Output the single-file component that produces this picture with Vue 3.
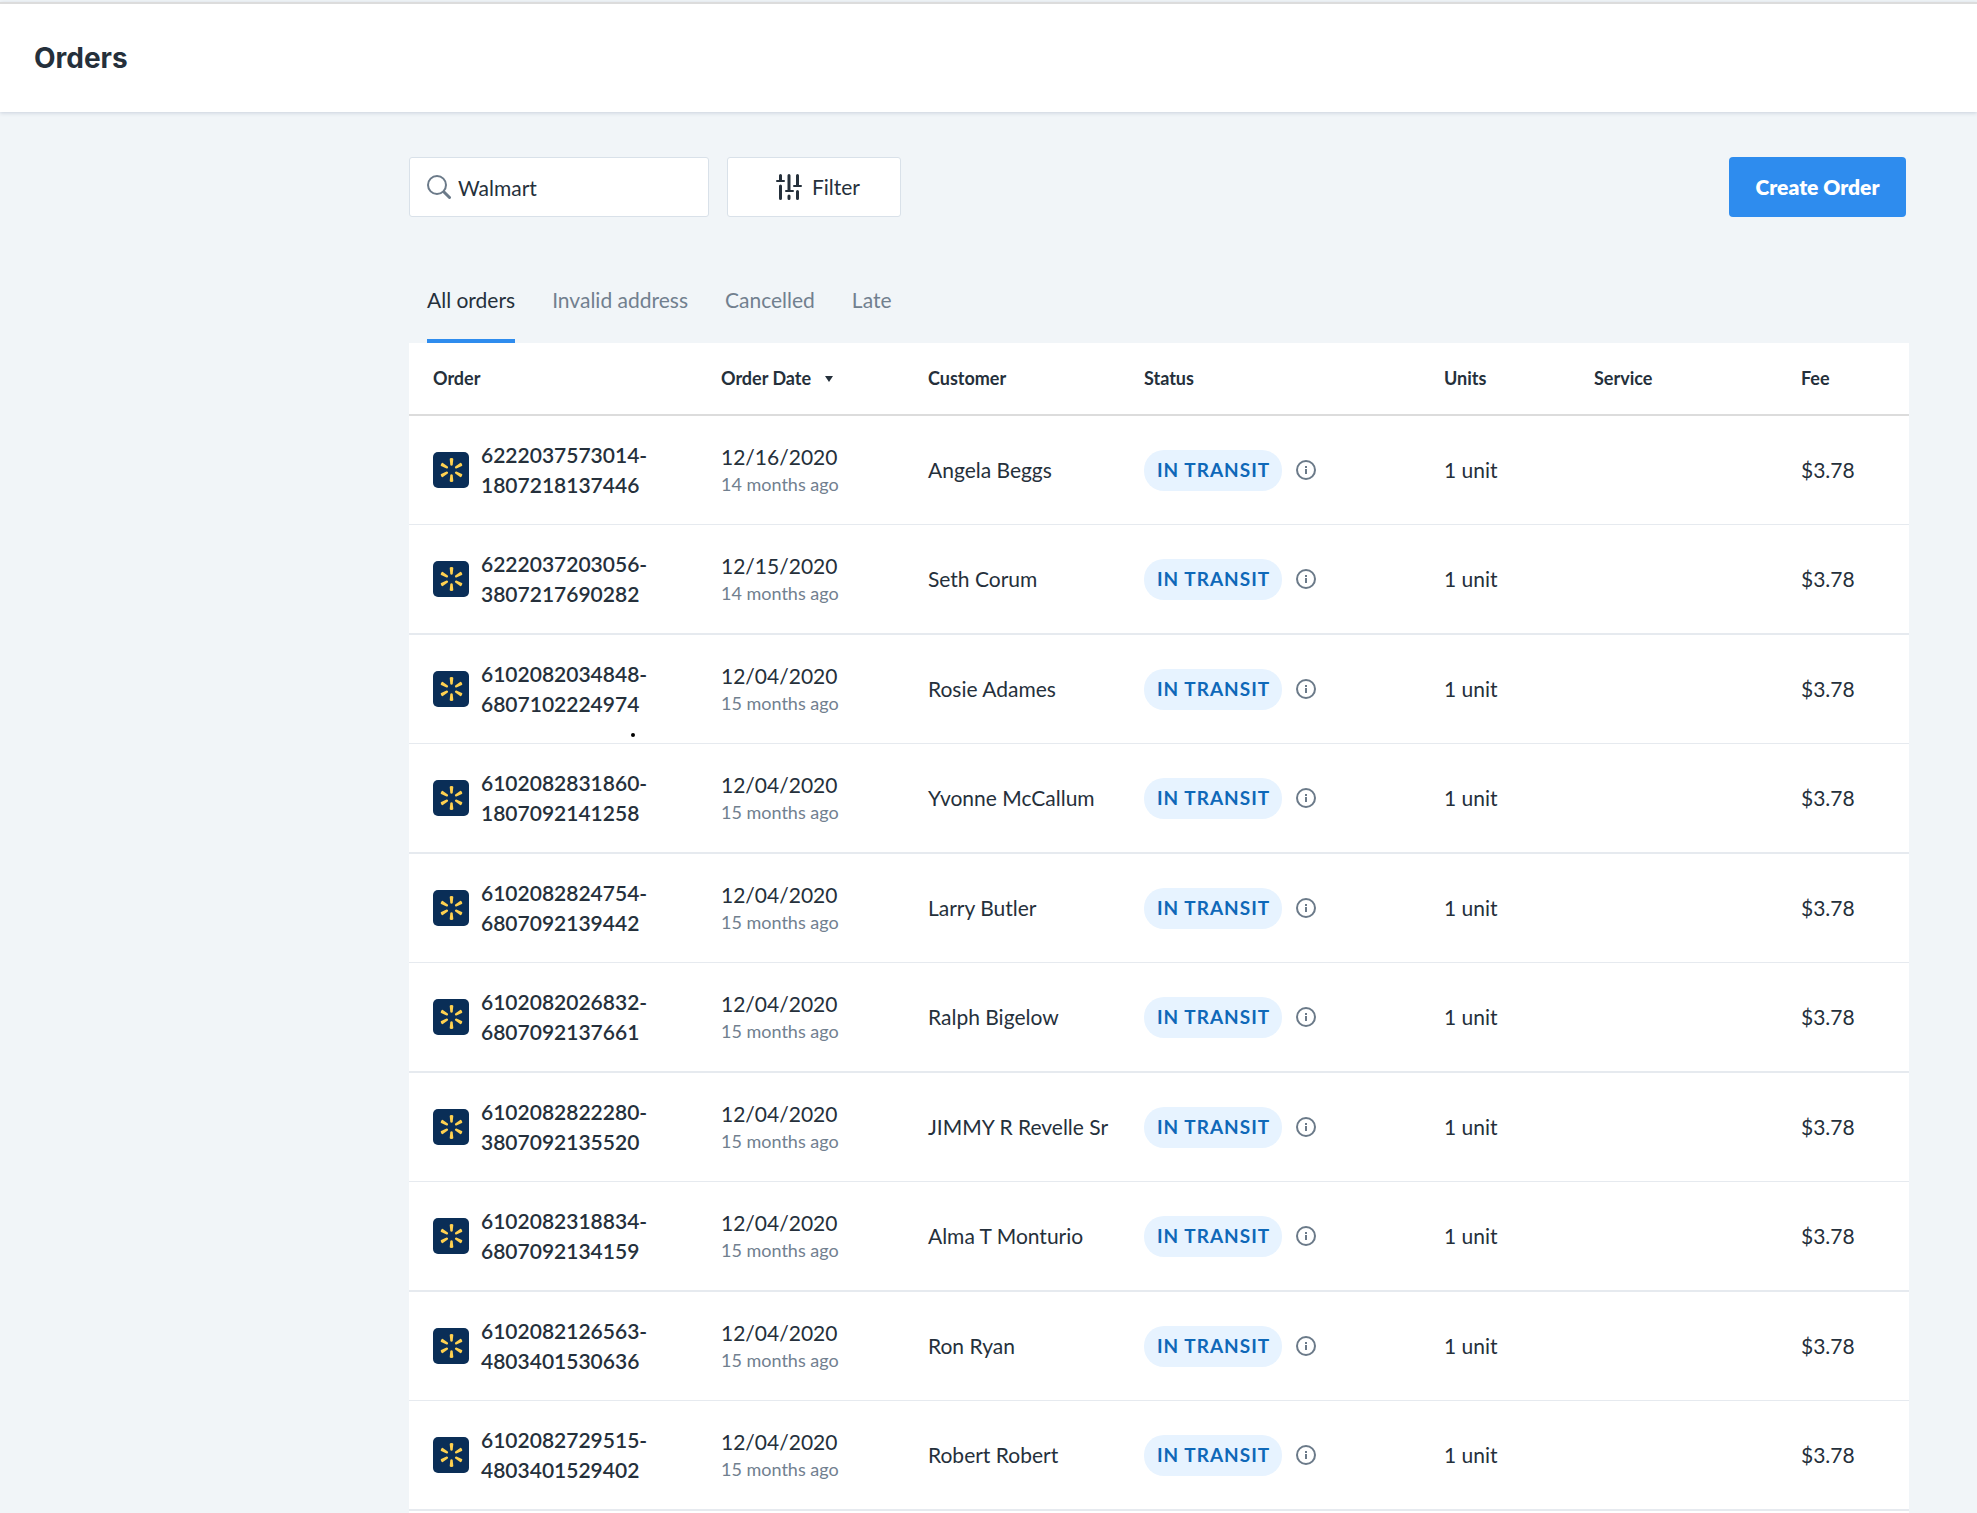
<script setup>
import { ref } from 'vue'

const query = ref('Walmart')
const tabs = ['All orders', 'Invalid address', 'Cancelled', 'Late']
const active = ref('All orders')

const orders = [
  { id: ['6222037573014-', '1807218137446'], date: '12/16/2020', ago: '14 months ago', customer: 'Angela Beggs' },
  { id: ['6222037203056-', '3807217690282'], date: '12/15/2020', ago: '14 months ago', customer: 'Seth Corum' },
  { id: ['6102082034848-', '6807102224974'], date: '12/04/2020', ago: '15 months ago', customer: 'Rosie Adames', marked: true },
  { id: ['6102082831860-', '1807092141258'], date: '12/04/2020', ago: '15 months ago', customer: 'Yvonne McCallum' },
  { id: ['6102082824754-', '6807092139442'], date: '12/04/2020', ago: '15 months ago', customer: 'Larry Butler' },
  { id: ['6102082026832-', '6807092137661'], date: '12/04/2020', ago: '15 months ago', customer: 'Ralph Bigelow' },
  { id: ['6102082822280-', '3807092135520'], date: '12/04/2020', ago: '15 months ago', customer: 'JIMMY R Revelle Sr' },
  { id: ['6102082318834-', '6807092134159'], date: '12/04/2020', ago: '15 months ago', customer: 'Alma T Monturio' },
  { id: ['6102082126563-', '4803401530636'], date: '12/04/2020', ago: '15 months ago', customer: 'Ron Ryan' },
  { id: ['6102082729515-', '4803401529402'], date: '12/04/2020', ago: '15 months ago', customer: 'Robert Robert' }
]
</script>

<template>
  <div class="page">
    <header class="topbar">
      <h1>Orders</h1>
    </header>
    <main class="content">
      <div class="toolbar">
        <label class="search">
          <svg width="24" height="24" viewBox="0 0 24 24" fill="none" stroke="#6b7a89" stroke-width="2" stroke-linecap="round" aria-hidden="true">
            <circle cx="10" cy="10" r="9" />
            <path stroke-width="3" d="M17 17L22.500 22.500" />
          </svg>
          <input v-model="query" type="text" aria-label="Search orders" />
        </label>
        <button class="filter" type="button">
          <svg width="26" height="26" viewBox="0 0 26 26" fill="none" stroke="#25303b" stroke-width="3" stroke-linecap="round" aria-hidden="true">
            <path d="M4.5 1.5V6M4.5 12V24.5M13 1.5V16M13 22V24.5M21.500 1.5V11M21.500 17.500V24.5" />
            <path stroke-width="2" d="M1 7H8M10 17H17M18 12H25" />
          </svg>
          Filter
        </button>
        <button class="create" type="button">Create Order</button>
      </div>

      <nav class="tabs">
        <a v-for="t in tabs" :key="t" href="#" :class="{ active: t === active }" @click.prevent="active = t">{{ t }}</a>
      </nav>

      <table>
        <colgroup>
          <col class="c-order" /><col class="c-date" /><col class="c-customer" /><col class="c-status" />
          <col class="c-units" /><col class="c-service" /><col class="c-fee" />
        </colgroup>
        <thead>
          <tr>
            <th>Order</th>
            <th>Order Date<span class="caret"></span></th>
            <th>Customer</th>
            <th>Status</th>
            <th>Units</th>
            <th>Service</th>
            <th>Fee</th>
          </tr>
        </thead>
        <tbody>
          <tr v-for="o in orders" :key="o.id[0]">
            <td>
              <div class="order">
                <svg class="logo" width="36" height="36" viewBox="0 0 36 36" aria-hidden="true">
                  <rect width="36" height="36" rx="5" fill="#0a2e57" />
                  <g fill="#ffd150">
                    <path
                      v-for="a in [0, 60, 120, 180, 240, 300]"
                      :key="a"
                      :transform="`rotate(${a} 18.5 18)`"
                      d="M16.700 7Q16.700 6 18.500 6T20.300 7L19.700 13Q19.500 13.800 18.500 13.800T17.300 13Z"
                    />
                  </g>
                </svg>
                <div class="order-id">{{ o.id[0] }}<br />{{ o.id[1] }}</div>
                <span v-if="o.marked" class="mark"></span>
              </div>
            </td>
            <td>
              <div class="date">{{ o.date }}</div>
              <div class="ago">{{ o.ago }}</div>
            </td>
            <td>{{ o.customer }}</td>
            <td>
              <div class="status">
                <span class="pill">IN TRANSIT</span>
                <svg width="20" height="20" viewBox="0 0 20 20" fill="none" stroke="#6b7a89" stroke-width="2" aria-hidden="true">
                  <circle cx="10" cy="10" r="9" />
                  <path d="M10 9V14M10 6V8" />
                </svg>
              </div>
            </td>
            <td>1 unit</td>
            <td></td>
            <td>$3.78</td>
          </tr>
        </tbody>
      </table>
    </main>
  </div>
</template>

<style>
body {
  margin: 0;
  background: #f1f5f8;
}
</style>

<style scoped>
.page {
  display: flow-root;
  font-family: Lato, sans-serif;
  font-size: 21px;
  line-height: 30px;
  color: #25303b;
  background: #f1f5f8;
}
.topbar {
  padding: 38px 34px;
  border-top: 2px solid #dcdcdc;
  margin-top: 2px;
  background: #fff;
  box-shadow: 0 1px 4px #c9d0dc;
}
h1 {
  margin: 0;
  font: 700 28px/32px Inter, sans-serif;
}
.content {
  padding: 45px 68px 0 409px;
}
.toolbar {
  display: flex;
  gap: 18px;
  padding-right: 3px;
}
.toolbar > * {
  box-sizing: border-box;
  height: 60px;
  border: 1px solid #d9e1e9;
  border-radius: 3px;
  background: #fff;
}
.search {
  display: flex;
  align-items: center;
  gap: 7px;
  width: 300px;
  padding: 0 17px;
}
.search svg {
  flex: none;
}
input {
  flex: 1;
  min-width: 0;
  padding: 2px 0 0;
  border: 0;
  outline: 0;
  background: none;
  font: inherit;
  color: inherit;
}
button {
  font: inherit;
  color: inherit;
  cursor: pointer;
}
.filter {
  display: flex;
  align-items: center;
  justify-content: center;
  gap: 10px;
  width: 174px;
  padding: 0 0 0 8px;
}
.toolbar .create {
  width: 177px;
  margin-left: auto;
  padding: 0;
  border: 0;
  border-radius: 4px;
  background: #2e8cee;
  color: #fff;
  font-weight: 800;
}
.tabs {
  display: flex;
  gap: 37px;
  margin-top: 53px;
  padding: 0 18px;
}
.tabs a {
  padding: 15px 0 24px;
  border-bottom: 4px solid transparent;
  color: #71808f;
  text-decoration: none;
}
.tabs a.active {
  border-color: #2e8cee;
  color: #25303b;
}
table {
  width: 100%;
  table-layout: fixed;
  border-collapse: separate;
  border-spacing: 0;
  padding-bottom: 2px;
  background: #fff;
}
.c-order { width: 19.2%; }
.c-date { width: 13.8%; }
.c-customer { width: 14.4%; }
.c-status { width: 20%; }
.c-units { width: 10%; }
.c-service { width: 13.8%; }
.c-fee { width: 8.8%; }
th {
  height: 69px;
  padding: 0 0 2px 24px;
  border-bottom: 2px solid #dcdcdc;
  text-align: left;
  font-size: 18px;
  font-weight: 700;
}
td {
  height: 108px;
  padding: 0 0 0 24px;
  border-bottom: 1px solid #e6eaef;
  white-space: nowrap;
}
tr:nth-child(even) td {
  border-bottom-width: 2px;
}
.caret {
  display: inline-block;
  margin-left: 14px;
  border: 4px solid transparent;
  border-top: 6px solid #25303b;
  border-bottom: 0;
  vertical-align: 3px;
}
.order {
  position: relative;
  display: flex;
  align-items: center;
  gap: 12px;
}
.order-id {
  font-weight: 600;
}
.mark {
  position: absolute;
  top: 74px;
  left: 198px;
  width: 4px;
  height: 4px;
  border-radius: 50%;
  background: #000;
}
.date {
  line-height: 28px;
}
.ago {
  font-size: 18px;
  line-height: 26px;
  color: #71808f;
}
.status {
  display: flex;
  align-items: center;
  gap: 14px;
}
.pill {
  padding: 0 12px 2px 13px;
  border-radius: 20px;
  background: #e7f3ff;
  color: #0f68b8;
  font-size: 19px;
  font-weight: 700;
  line-height: 39px;
  letter-spacing: 1px;
}
</style>
